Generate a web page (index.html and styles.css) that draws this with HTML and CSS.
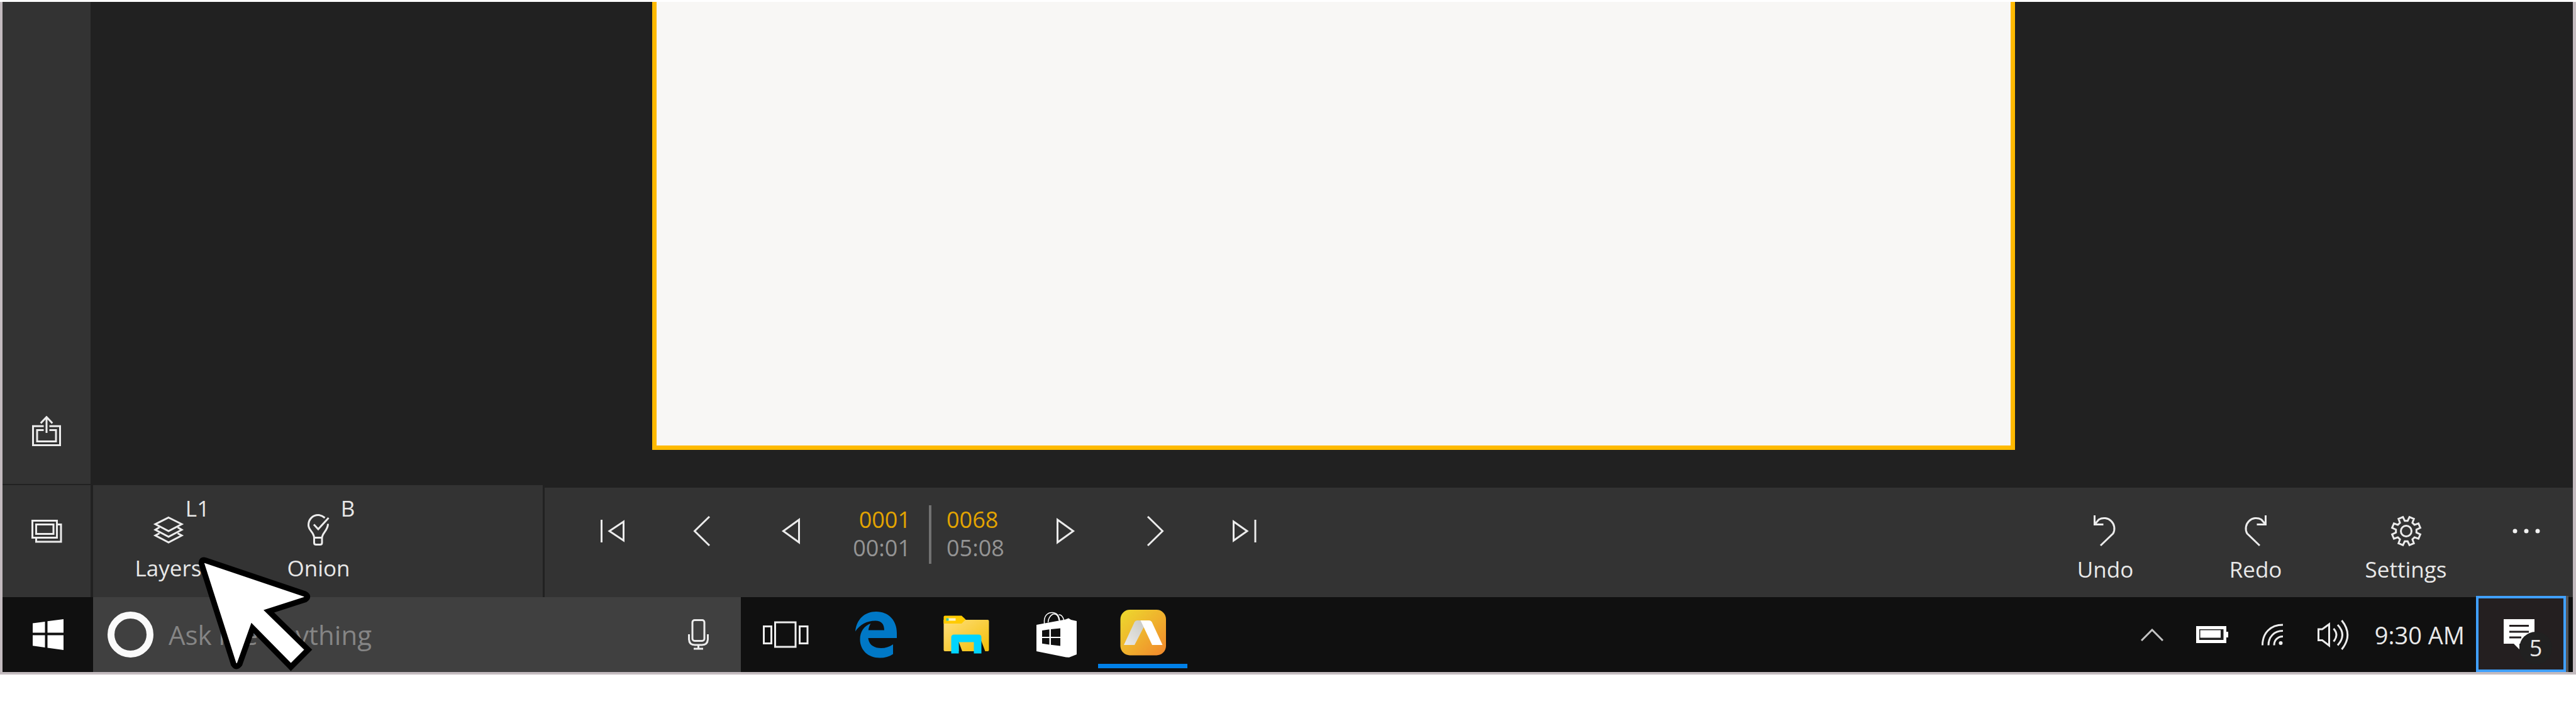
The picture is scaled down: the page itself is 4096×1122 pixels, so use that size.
FILE: index.html
```html
<!DOCTYPE html>
<html lang="en">
  <head>
    <meta charset="UTF-8" />
    <meta name="viewport" content="width=device-width, initial-scale=1.0" />
    <title>Animation Desk</title>
    <link rel="stylesheet" href="styles.css" />
  </head>
  <body>
    <div class="screen">
      <div class="editor">
        <aside class="sidebar">
          <button class="side-btn" aria-label="Share">
            <svg class="line" width="46" height="48" viewBox="0 0 46 48">
              <path d="M18.5 16.2H1.5V46.5H44.5V16.2H27.5" />
              <path d="M18.5 22.5H8V40.5H38V22.5H27.5" />
              <path d="M23 27V2M13.7 11.6L23 1.8L32.3 11.6" />
            </svg>
          </button>
        </aside>
        <main class="stage">
          <div class="canvas"></div>
        </main>
      </div>

      <div class="toolbar">
        <button class="frames" aria-label="Frames">
          <svg class="line" width="49" height="37" viewBox="0 0 49 37">
            <path d="M1.5 1.5H40.5V28.5H1.5Z" />
            <path d="M7.5 7.5H35V22.5H7.5Z" />
            <path d="M40.5 7.5H47V35H7.5V28.5" />
          </svg>
        </button>

        <div class="layer-tools">
          <button class="tool">
            <svg class="line" width="50" height="50" viewBox="-2 -4 50 50">
              <path d="M23 1.5L44 12L23 23L2 12Z" />
              <path d="M8.5 17L2 21L23 32L44 21L37.5 17" />
              <path d="M8.5 26.5L2 30L23 41L44 30L37.5 26.5" />
            </svg>
            <span class="badge">L1</span>
            Layers
          </button>
          <button class="tool">
            <svg class="line" width="50" height="50" viewBox="-7 0 50 50">
              <path d="M27.5 6C24 3 21 1.5 17 1.5C8 1.5 1.5 8.5 1.5 17.5C1.5 26 10.5 29 10.5 38V45.5Q10.5 48.5 13.5 48.5H20Q23 48.5 23 45.5V38C23 30 32.5 26 32.5 15.5" />
              <path d="M10.5 37.5H23" />
              <path d="M10 16.5L17 24L33.5 6" />
            </svg>
            <span class="badge">B</span>
            Onion
          </button>
        </div>

        <div class="controls">
          <div class="playback">
            <button class="step" aria-label="First frame">
              <svg class="line" width="50" height="50" viewBox="-6 -7 50 50">
                <path d="M1.5 0V36" />
                <path d="M36.5 3V33L14 18Z" />
              </svg>
            </button>
            <button class="step" aria-label="Previous frame">
              <svg class="line" width="50" height="50" viewBox="-12 -1 50 50">
                <path d="M25 1L1.5 24L25 47" />
              </svg>
            </button>
            <button class="step" aria-label="Play backwards">
              <svg class="line" width="50" height="50" viewBox="-10 -4 50 50">
                <path d="M27.5 3V39L2.5 21Z" />
              </svg>
            </button>
            <div class="time">
              <div class="time-now">
                <div class="frame-no">0001</div>
                <div>00:01</div>
              </div>
              <div class="time-total">
                <div class="frame-no">0068</div>
                <div>05:08</div>
              </div>
            </div>
            <button class="step" aria-label="Play">
              <svg class="line" width="50" height="50" viewBox="-10 -4 50 50">
                <path d="M1.5 3V39L26.5 21Z" />
              </svg>
            </button>
            <button class="step" aria-label="Next frame">
              <svg class="line" width="50" height="50" viewBox="-12 -1 50 50">
                <path d="M1 1L24.5 24L1 47" />
              </svg>
            </button>
            <button class="step" aria-label="Last frame">
              <svg class="line" width="50" height="50" viewBox="-6 -7 50 50">
                <path d="M36 0V36" />
                <path d="M1.5 3V33L23 18Z" />
              </svg>
            </button>
          </div>

          <div class="actions">
            <button class="tool">
              <svg class="line" width="50" height="50" viewBox="-6 0 50 50">
                <path d="M1.5 0V14.5H15.5" />
                <path d="M2 14L8.2 6.7A16.5 16.5 0 0 1 31 28.8L11 48" />
              </svg>
              Undo
            </button>
            <button class="tool">
              <svg class="line" width="50" height="50" viewBox="-4 0 50 50">
                <path d="M36.5 0V14.5H22.5" />
                <path d="M36 14L29.8 6.7A16.5 16.5 0 0 0 7 28.8L27 48" />
              </svg>
              Redo
            </button>
            <button class="tool">
              <svg class="line" width="50" height="50" viewBox="0 0 50 50">
                <path d="M19.8 2.6L22.7 8.7H27.3L30.2 2.6L37.2 5.5L34.9 11.8L38.2 15.1L44.5 12.8L47.4 19.8L41.3 22.7V27.3L47.4 30.2L44.5 37.2L38.2 34.9L34.9 38.2L37.2 44.5L30.2 47.4L27.3 41.3H22.7L19.8 47.4L12.8 44.5L15.1 38.2L11.8 34.9L5.5 37.2L2.6 30.2L8.7 27.3V22.7L2.6 19.8L5.5 12.8L11.8 15.1L15.1 11.8L12.8 5.5Z" />
                <circle cx="25" cy="25" r="8.5" />
              </svg>
              Settings
            </button>
            <button class="more" aria-label="More">
              <svg width="50" height="50" viewBox="0 0 50 50" fill="#f2f2f2">
                <circle cx="6" cy="25" r="3.5" />
                <circle cx="24" cy="25" r="3.5" />
                <circle cx="42" cy="25" r="3.5" />
              </svg>
            </button>
          </div>
        </div>
      </div>

      <div class="taskbar">
        <button class="start" aria-label="Start">
          <svg width="144" height="119" viewBox="0 0 144 119" fill="#fff">
            <path d="M48 41.5L67.5 39V56.5H48Z" />
            <path d="M71.5 38.3L97 35V56.5H71.5Z" />
            <path d="M48 60.5H67.5V80L48 77.2Z" />
            <path d="M71.5 60.5H97V84L71.5 80.5Z" />
          </svg>
        </button>

        <div class="search">
          <span class="cortana"></span>
          <input type="text" class="search-input" aria-label="Search" placeholder="Ask me anything" />
          <button class="mic" aria-label="Microphone">
            <svg class="line" width="33" height="49" viewBox="0 0 33 49">
              <rect x="7" y="1.5" width="19" height="33" rx="3.5" />
              <path d="M1.5 24V31Q1.5 41 11 41H22Q31.5 41 31.5 31V24" />
              <path d="M16.5 41V47M9 47H24" />
            </svg>
          </button>
        </div>

        <div class="apps">
          <button class="app" aria-label="Task View">
            <svg class="line" width="142" height="119" viewBox="0 0 142 119">
              <path d="M36.5 46.5H48.5V73.5H36.5Z" />
              <path d="M54.5 40H87V79H54.5Z" />
              <path d="M93.5 46.5H106V73.5H93.5Z" />
            </svg>
          </button>
          <button class="app" aria-label="Edge">
            <svg width="142" height="119" viewBox="0 0 142 119">
              <path fill="#0078c6" d="M40 54.5C42 35 55 23 73 23C94 23 106 38 106 57V65H60.5C61.5 76 70 81 81 81C88 81 94 79 100 75V90.5C94 94.5 87 96.5 79 96.5C60 96.5 47.5 84 47.5 67C47.5 55 54 45.5 64.5 42C62.5 45 61.2 48.5 60.8 52.5H86C86 43 81.5 37.5 72 37.5C58 37.5 47 44 40 54.5Z" />
            </svg>
          </button>
          <button class="app" aria-label="File Explorer">
            <svg width="142" height="119" viewBox="0 0 142 119">
              <defs>
                <linearGradient id="folder" x1="0" y1="0" x2="1" y2="1">
                  <stop offset="0" stop-color="#ffdf7c" />
                  <stop offset="1" stop-color="#f2be06" />
                </linearGradient>
              </defs>
              <path fill="url(#folder)" d="M38.5 36H108.5Q110.5 36 110.5 38V84Q110.5 86 108.5 86H104.5L98.5 70H87V86H68L62 70L62.5 86H40.5Q38.5 86 38.5 84Z" />
              <path fill="#ffcb00" d="M40.5 29.5H67L73.5 35.5L67 42H38.5V31.5Q38.5 29.5 40.5 29.5Z" />
              <path fill="#fff3c4" d="M45 33.5H57.5V37.5H45Z" />
              <path fill="#3cc8a0" d="M42.5 33.5H46.5V37.5H42.5Z" />
              <path fill="#00d4ff" d="M50.5 89.5V64Q50.5 59.5 55 59.5H94Q98.5 59.5 98.5 64V89.5H86.5V71.5H62.5V89.5Z" />
            </svg>
          </button>
          <button class="app" aria-label="Store">
            <svg width="142" height="119" viewBox="0 0 142 119">
              <g fill="none" stroke="#fff" stroke-width="1.5">
                <path d="M56.5 43V37C57 29 62 24.5 69 24.5C76 24.5 80 29 81 38" />
                <path d="M62.5 40C62.5 35 65.5 29.5 70 27C75 25.5 79 29 80 37" />
                <path d="M79.5 28C83 27.5 86 31 87.5 36" />
              </g>
              <path fill="#fff" d="M44 44L90 35.5L95 33.5L99 36L108 38V91L96 95.8L91 95.5L44 86Z" />
              <path fill="#101010" d="M53 53L64.5 51.2V63H53ZM67 51L82 49.5V63H67ZM53 65H64.5V75.5L53 73.8ZM67 65H82V77.5L67 75.8Z" />
            </svg>
          </button>
          <button class="app active" aria-label="Animation Desk">
            <svg width="142" height="119" viewBox="0 0 142 119">
              <defs>
                <linearGradient id="desk" x1="0" y1="0" x2="1" y2="1">
                  <stop offset="0" stop-color="#edda2e" />
                  <stop offset="0.5" stop-color="#efb22d" />
                  <stop offset="1" stop-color="#f1862b" />
                </linearGradient>
                <linearGradient id="fold" x1="1" y1="0" x2="0" y2="1">
                  <stop offset="0" stop-color="#c9c9c3" />
                  <stop offset="1" stop-color="#ecebe8" />
                </linearGradient>
              </defs>
              <rect fill="url(#desk)" x="35.5" y="20" width="72.5" height="72.5" rx="15" />
              <path fill="url(#fold)" d="M41 76L58 39.5Q59.5 37 62 37H70L73.5 46L58 76Z" />
              <path fill="#fff" d="M67.5 37H81.5Q84 37 85.5 39.5L102.5 76H86Z" />
            </svg>
          </button>
        </div>

        <div class="tray">
          <button class="tray-btn" aria-label="Show hidden icons">
            <svg class="line thin" width="36" height="20" viewBox="0 0 36 20">
              <path d="M1 19L18 2L35 19" />
            </svg>
          </button>
          <button class="tray-btn" aria-label="Battery">
            <svg width="51" height="27" viewBox="0 0 51 27">
              <path fill="#fff" d="M0 0H48V9H51V18H48V27H0Z" />
              <path fill="#202020" d="M5 5H43.5V22H5Z" />
              <path fill="#fff" d="M6.5 6.5H39V18.5H6.5Z" />
            </svg>
          </button>
          <button class="tray-btn" aria-label="Network">
            <svg class="line" width="35" height="35" viewBox="0 0 35 35">
              <path d="M1.5 34.5C1.5 15 14 2 34 2" />
              <path d="M11 34.5C11 21 20 11.5 34 11.5" />
              <path d="M20 34.5C20 26 26 20.5 34 20.5" />
              <circle cx="30.5" cy="31" r="1.5" />
            </svg>
          </button>
          <button class="tray-btn" aria-label="Volume">
            <svg class="line" width="50" height="48" viewBox="0 0 50 48">
              <path d="M1.5 15H7.5L18.5 7V41L7.5 32.5H1.5Z" />
              <path d="M25.5 14Q34.5 24 25.5 34.5" />
              <path d="M32 8Q47 24 32 40.5" />
              <path d="M38.5 1Q57 24 38.5 47" />
            </svg>
          </button>
          <div class="clock">9:30 AM</div>
          <button class="notifications" aria-label="Notifications">
            <svg width="49" height="48" viewBox="0 0 49 48">
              <path fill="#fff" d="M0 0H49V39H25V48L16 39H0Z" />
              <path fill="none" stroke="#241f20" stroke-width="3" d="M9 10.5H40M9 20H40M9 29H28" />
            </svg>
            <span class="count">5</span>
          </button>
        </div>
      </div>
    </div>

    <svg class="cursor" width="200" height="210" viewBox="0 0 200 210">
      <path d="M26.5 20.5L185 74Q192.500 78 185 83L127.5 101.5L190 162.5L162.5 190L101.5 128L81 185.5Q76 192.5 71.5 185.5L20.5 26Q19.5 18.5 26.5 20.5Z" />
    </svg>
  </body>
</html>
```
FILE: styles.css
```css
* {
  box-sizing: border-box;
}

body {
  margin: 0;
  padding: 3px 0 50px;
  height: 100vh;
  background-color: #fff;
  color: #e8e8e8;
  font-family: "Open Sans", "Noto Sans", sans-serif;
  font-size: 36px;
  line-height: 48px;
}

button {
  display: flex;
  align-items: center;
  justify-content: center;
  margin: 0;
  padding: 0;
  border: none;
  background: none;
  color: inherit;
  font: inherit;
}

svg {
  display: block;
  flex: none;
}

.line {
  fill: none;
  stroke: #ececec;
  stroke-width: 3;
}
.thin {
  stroke: #c4c4c4;
}

.screen {
  display: flex;
  flex-direction: column;
  height: 100%;
  border: solid #c3bbbf;
  border-width: 0 5px 4px 4px;
  background-color: #212121;
}

/* drawing area */
.editor {
  display: flex;
  flex: 1;
}
.sidebar {
  display: flex;
  flex-direction: column;
  justify-content: flex-end;
  width: 140px;
  padding-bottom: 60px;
  background-color: #333;
}
.side-btn {
  width: 100%;
}
.stage {
  display: flex;
  flex: 1;
  padding: 0 887px 54px 893px;
}
.canvas {
  flex: 1;
  border: 7px solid #ffba00;
  border-top: none;
  background-color: #f8f7f5;
}

/* toolbar */
.toolbar {
  display: flex;
  height: 180px;
  padding-top: 2px;
}
.frames {
  width: 140px;
  margin-right: 4px;
  padding-bottom: 32px;
  background-color: #333;
}
.layer-tools {
  display: flex;
  width: 715px;
  margin-right: 3px;
  padding-top: 2px;
  background-color: #333;
}
.controls {
  display: flex;
  flex: 1;
  justify-content: space-between;
  margin-top: 4px;
  padding-left: 37px;
  background-color: #333;
}
.playback,
.actions {
  display: flex;
}
.tool {
  position: relative;
  flex-direction: column;
  justify-content: flex-start;
  gap: 12px;
  width: 239px;
  padding-top: 44px;
  font-size: 35px;
}
.badge {
  position: absolute;
  top: 11px;
  left: 146px;
  width: 40px;
}
.step {
  align-items: flex-start;
  width: 142px;
  padding-top: 44px;
}
.more {
  align-items: flex-start;
  width: 146px;
  padding-top: 44px;
}

.time {
  display: flex;
  padding-top: 28px;
  line-height: 45px;
  color: #949494;
}
.time-now {
  width: 148px;
  padding-right: 29px;
  text-align: right;
}
.time-total {
  width: 147px;
  height: 93px;
  padding-left: 24px;
  border-left: 4px solid #727272;
}
.frame-no {
  color: #e3a400;
}

/* taskbar */
.taskbar {
  display: flex;
  height: 119px;
  background-color: #101010;
}
.start {
  width: 144px;
}
.search {
  display: flex;
  align-items: center;
  width: 1030px;
  padding: 0 51px 0 23px;
  background-color: #404040;
}
.cortana {
  width: 73px;
  height: 73px;
  border: 11px solid #fafafa;
  border-radius: 50%;
}
.search-input {
  flex: 1;
  height: 64px;
  margin: 0 24px;
  padding: 0;
  border: none;
  background: none;
  color: #e8e8e8;
  font: inherit;
  font-size: 42px;
  line-height: 64px;
}
.search-input::placeholder {
  color: #858585;
}
.apps {
  display: flex;
  flex: 1;
}
.app {
  width: 142px;
}
.active {
  background: linear-gradient(#0080e8, #0080e8) 0 106px / 100% 7px no-repeat;
}

.tray {
  display: flex;
  padding-right: 11px;
}
.tray-btn {
  width: 96px;
}
.clock {
  align-self: center;
  padding: 0 18px;
  font-size: 38px;
}
.notifications {
  position: relative;
  width: 143px;
  height: 121px;
  margin-top: -2px;
  border: 4px solid #40a0ff;
  background-color: #241f20;
  box-shadow: 4px 0 #555;
}
.notifications svg {
  margin-right: 6px;
}
.count {
  position: absolute;
  top: 53px;
  left: 65px;
  width: 52px;
  border-radius: 50%;
  background-color: #212121;
  line-height: 52px;
  text-align: center;
}

.cursor {
  position: absolute;
  top: 870px;
  left: 300px;
  fill: #fff;
  stroke: #000;
  stroke-width: 9;
  stroke-miterlimit: 10;
}
```
